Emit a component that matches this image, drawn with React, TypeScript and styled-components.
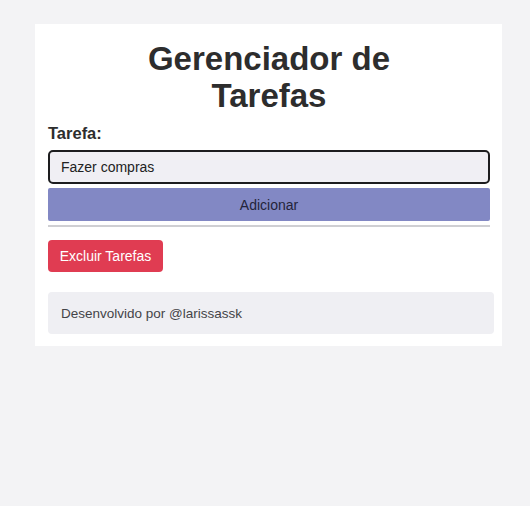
import React from "react";
import styled, { createGlobalStyle } from "styled-components";

const Global = createGlobalStyle`
  html, body { margin: 0; padding: 0; background: #f3f3f5; }
  body { font-family: "Liberation Sans", Arial, sans-serif; color: #2b2b2b; }
  * { box-sizing: border-box; }
`;

const Page = styled.div`
  padding: 24px 0 0 35px;
`;

const Card = styled.main`
  width: 467px;
  background: #ffffff;
  padding: 16px 8px 12px 13px;
  display: flex;
  flex-direction: column;
`;

const Title = styled.h1`
  margin: 0 4px 0 0;
  text-align: center;
  font-size: 33px;
  line-height: 37px;
  font-weight: 700;
  color: #2d2d2d;
`;

const Form = styled.form`
  margin: 9px 4px 0 0;
  display: flex;
  flex-direction: column;
`;

const Label = styled.label`
  font-size: 16.5px;
  font-weight: 700;
  color: #2d2d2d;
  line-height: 20px;
  margin-bottom: 7px;
`;

const Input = styled.input`
  height: 34px;
  border: 2px solid #1d1d1f;
  border-radius: 5px;
  background: #f0eff4;
  padding: 0 11px;
  font-family: inherit;
  font-size: 14px;
  color: #222;
  outline: none;
`;

const AddButton = styled.button`
  margin-top: 4px;
  height: 33px;
  border: none;
  border-radius: 2px;
  background: #8288c4;
  color: #24243a;
  font-family: inherit;
  font-size: 14px;
  cursor: pointer;
`;

const Divider = styled.hr`
  margin: 4px 0 0;
  border: none;
  height: 2px;
  background: #cfcfd3;
`;

const DeleteButton = styled.button`
  align-self: flex-start;
  margin-top: 13px;
  height: 32px;
  width: 115px;
  padding: 0;
  border: none;
  border-radius: 4px;
  background: #e03c52;
  color: #ffffff;
  font-family: inherit;
  font-size: 14px;
  cursor: pointer;
`;

const Footer = styled.footer`
  margin-top: 20px;
  height: 42px;
  display: flex;
  align-items: center;
  padding: 0 13px;
  background: #efeff3;
  border-radius: 4px;
  font-size: 13.5px;
  color: #444448;
`;

export default function App() {
  return (
    <>
      <Global />
      <Page>
        <Card>
          <Title>
            Gerenciador de
            <br />
            Tarefas
          </Title>
          <Form onSubmit={(e) => e.preventDefault()}>
            <Label htmlFor="tarefa">Tarefa:</Label>
            <Input id="tarefa" defaultValue="Fazer compras" />
            <AddButton type="submit">Adicionar</AddButton>
            <Divider />
          </Form>
          <DeleteButton type="button">Excluir Tarefas</DeleteButton>
          <Footer>Desenvolvido por @larissassk</Footer>
        </Card>
      </Page>
    </>
  );
}
